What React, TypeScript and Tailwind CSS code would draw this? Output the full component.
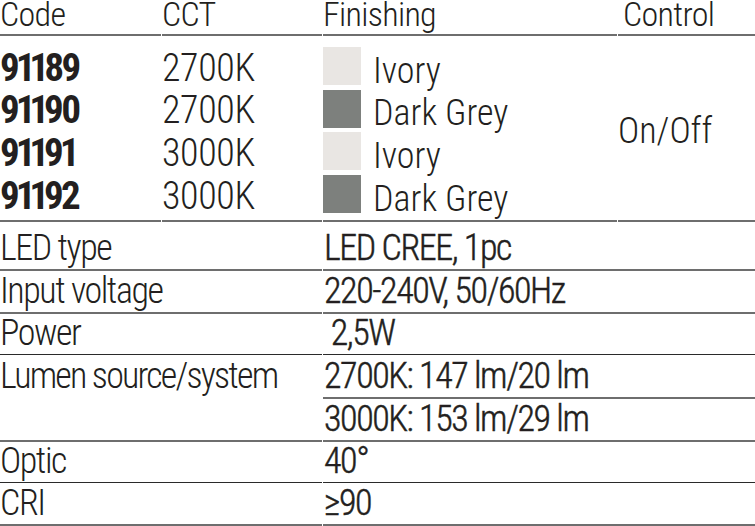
const G = "border-[#6e6e6e]";

function Swatch({ dark }: { dark: boolean }) {
  return (
    <div
      className={
        "w-[38px] h-[38px] shrink-0 " + (dark ? "bg-[#7d807d]" : "bg-[#e9e6e3]")
      }
    />
  );
}

export default function App() {
  const codes = ["91189", "91190", "91191", "91192"];
  const ccts = ["2700K", "2700K", "3000K", "3000K"];
  const fin: [string, boolean][] = [
    ["Ivory", false],
    ["Dark Grey", true],
    ["Ivory", false],
    ["Dark Grey", true],
  ];
  return (
    <div className="w-[755px] h-[526px] bg-white text-[#231f20] font-[Roboto_Condensed,Liberation_Sans_Narrow,sans-serif] overflow-hidden">
      {/* Top table */}
      <div className="grid grid-cols-[161px_160px_294px_1fr] gap-x-px">
        {["Code", "CCT", "Finishing", "Control"].map((h, i) => (
          <div
            key={h}
            className={
              "h-[36px] border-b-2 " +
              G +
              " flex items-end pb-[3px] text-[34px] font-light leading-none tracking-[-0.02em] " +
              (i === 3 ? "pl-[5px]" : "")
            }
          >
            {h}
          </div>
        ))}

        {/* Code column */}
        <div className={"h-[186px] border-b-2 " + G + " pt-[8px] flex flex-col"}>
          {codes.map((c) => (
            <div key={c} className="h-[42.67px] flex items-end">
              <span className="text-[39px] font-bold leading-none tracking-[-0.08em] proportional-nums mb-[-1px]">
                {c}
              </span>
            </div>
          ))}
        </div>

        {/* CCT column */}
        <div className={"h-[186px] border-b-2 " + G + " pt-[8px] flex flex-col"}>
          {ccts.map((c, i) => (
            <div key={i} className="h-[42.67px] flex items-end">
              <span className="text-[38px] font-light leading-none tracking-[-0.01em]">{c}</span>
            </div>
          ))}
        </div>

        {/* Finishing column */}
        <div className={"h-[186px] border-b-2 " + G + " pt-[8px] flex flex-col"}>
          {fin.map(([t, d], i) => (
            <div key={i} className="h-[42.67px] flex items-start pt-[3px]">
              <Swatch dark={d} />
              <span className="ml-[12px] self-end mb-[-2px] text-[36px] font-light leading-none tracking-[0em]">
                {t}
              </span>
            </div>
          ))}
        </div>

        {/* Control column */}
        <div className={"h-[186px] border-b-2 " + G + " flex items-center pt-[6px]"}>
          <span className="text-[36px] font-light leading-none tracking-[0em]">On/Off</span>
        </div>
      </div>

      {/* Spec table */}
      <div className="grid grid-cols-[322px_1fr] gap-x-px text-[36px] leading-none">
        <Label h="h-[49px]" b="border-b-2" c={G}>LED type</Label>
        <Value h="h-[49px]" b="border-b-2" c={G}>LED CREE, 1pc</Value>

        <Label h="h-[43px]" b="border-b-2" c={G}>Input voltage</Label>
        <Value h="h-[43px]" b="border-b-2" c={G}>220-240V, 50/60Hz</Value>

        <Label h="h-[41px]" b="border-b" c="border-[#2a2a2a]">Power</Label>
        <Value h="h-[41px]" b="border-b" c="border-[#2a2a2a]">{" 2,5W"}</Value>

        <div className={"row-span-2 border-b-2 " + G + " pt-[3px] font-light tracking-[-0.05em]"}>
          Lumen source/system
        </div>
        <Value h="h-[44px]" b="border-b-2" c={G}>2700K: 147 lm/20 lm</Value>
        <Value h="h-[43px]" b="border-b-2" c={G}>3000K: 153 lm/29 lm</Value>

        <Label h="h-[41px]" b="border-b" c="border-[#2a2a2a]">Optic</Label>
        <Value h="h-[41px]" b="border-b" c="border-[#2a2a2a]">40°</Value>

        <Label h="h-[43px]" b="border-b-2" c={G}>CRI</Label>
        <Value h="h-[43px]" b="border-b-2" c={G}>≥90</Value>
      </div>
    </div>
  );
}

function Label({ h, b, c, children }: { h: string; b: string; c: string; children: React.ReactNode }) {
  return (
    <div className={h + " " + b + " " + c + " flex items-end pb-[3px] font-light tracking-[-0.04em]"}>
      <span>{children}</span>
    </div>
  );
}

function Value({ h, b, c, children }: { h: string; b: string; c: string; children: React.ReactNode }) {
  return (
    <div className={h + " " + b + " " + c + " flex items-end pb-[3px] pl-px font-light tracking-[-0.04em] whitespace-pre [-webkit-text-stroke:0.45px_#231f20]"}>
      <span>{children}</span>
    </div>
  );
}
